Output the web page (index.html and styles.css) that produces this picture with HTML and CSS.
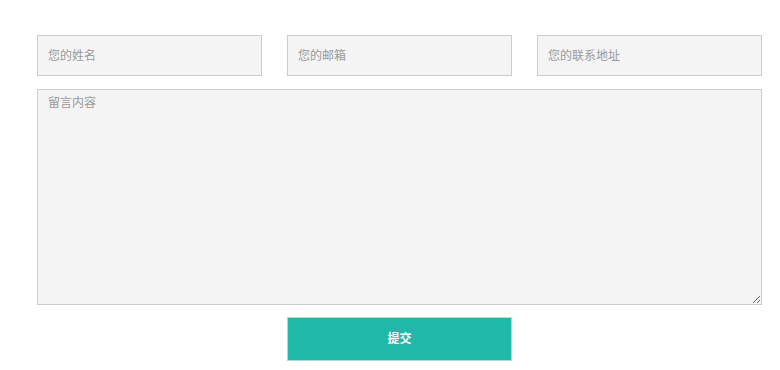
FILE: index.html
```html
<!DOCTYPE html>
<html>
<head>
<meta charset="utf-8">
<link rel="stylesheet" href="styles.css">
</head>
<body>
<form class="form">
  <div class="row">
    <input class="field" type="text" placeholder="您的姓名">
    <input class="field" type="text" placeholder="您的邮箱">
    <input class="field" type="text" placeholder="您的联系地址">
  </div>
  <textarea class="message" placeholder="留言内容"></textarea>
  <div class="actions">
    <button class="submit" type="button">提交</button>
  </div>
</form>
</body>
</html>
```
FILE: styles.css
```css
html, body {
  margin: 0;
  padding: 0;
  background: #fff;
}
body {
  font-family: "Microsoft YaHei", "Noto Sans CJK SC", "Liberation Sans", sans-serif;
}
.form {
  width: 725px;
  margin: 0;
  padding: 35px 0 0 37px;
  display: flex;
  flex-direction: column;
}
.row {
  display: grid;
  grid-template-columns: repeat(3, 225px);
  column-gap: 25px;
}
.field {
  box-sizing: border-box;
  height: 41px;
  border: 1px solid #cccccc;
  background: #f4f4f4;
  padding: 0 10px 2px;
  font-size: 12px;
  font-family: inherit;
  color: #555;
  outline: none;
}
.field::placeholder, .message::placeholder {
  color: #999999;
}
.message {
  box-sizing: border-box;
  margin-top: 13px;
  width: 725px;
  height: 216px;
  border: 1px solid #cccccc;
  background: #f4f4f4;
  padding: 4px 10px;
  font-size: 12px;
  line-height: 16px;
  font-family: inherit;
  color: #555;
  outline: none;
  resize: both;
}
.actions {
  margin-top: 12px;
  display: grid;
  grid-template-columns: repeat(3, 225px);
  column-gap: 25px;
}
.submit {
  grid-column: 2;
  box-sizing: border-box;
  height: 44px;
  padding: 0 0 4px;
  border: 1px solid #cccccc;
  background: #1fb8a9;
  color: #fff;
  font-size: 12px;
  font-weight: bold;
  font-family: inherit;
  cursor: pointer;
}
```
